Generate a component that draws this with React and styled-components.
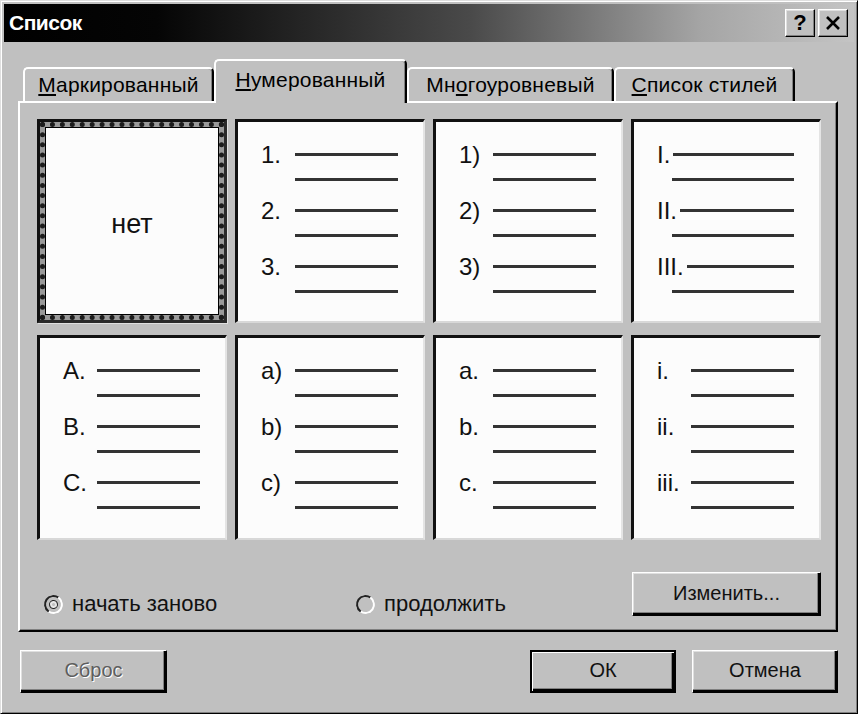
import React, { useState } from "react";
import styled, { createGlobalStyle } from "styled-components";

const GlobalStyle = createGlobalStyle`
  html, body {
    margin: 0;
    padding: 0;
    background: #c0c0c0;
  }
  body {
    font-family: "Liberation Sans", Arial, sans-serif;
  }
`;

const Window = styled.div`
  box-sizing: border-box;
  width: 858px;
  height: 714px;
  display: flex;
  flex-direction: column;
  background: #c0c0c0;
  border: 1px solid;
  border-color: #dfdfdf #000 #000 #dfdfdf;
  box-shadow: inset 1px 1px #fff, inset -1px -1px #808080;
  padding: 3px;
`;

const TitleBar = styled.div`
  height: 38px;
  flex: none;
  display: flex;
  align-items: center;
  justify-content: space-between;
  padding: 0 6px 0 5px;
  background: linear-gradient(90deg, #000 0%, #050505 18%, #4a4a4a 55%, #a5a5a5 82%, #c4c4c4 100%);
`;

const Title = styled.span`
  color: #fff;
  font-weight: bold;
  font-size: 21px;
  letter-spacing: -0.5px;
`;

const TitleButtons = styled.div`
  display: flex;
  gap: 3px;
`;

const TitleButton = styled.button`
  box-sizing: border-box;
  width: 30px;
  height: 28px;
  padding: 0;
  display: flex;
  align-items: center;
  justify-content: center;
  background: #c0c0c0;
  border: 1px solid;
  border-color: #fff #000 #000 #fff;
  box-shadow: inset -1px -1px #808080, inset 1px 1px #dfdfdf;
  font-family: "Liberation Sans", Arial, sans-serif;
  font-weight: bold;
  font-size: 22px;
  color: #000;
`;

const Body = styled.div`
  flex: 1;
  display: flex;
  flex-direction: column;
  padding: 17px 16px 17px 14px;
`;

const TabStrip = styled.div`
  display: flex;
  align-items: flex-end;
  height: 42px;
  padding-left: 5px;
`;

const Tab = styled.div`
  box-sizing: border-box;
  position: relative;
  z-index: ${(p) => (p.$active ? 2 : 0)};
  width: ${(p) => p.$width}px;
  height: ${(p) => (p.$active ? 44 : 34)}px;
  margin-bottom: ${(p) => (p.$active ? -2 : 0)}px;
  padding-bottom: ${(p) => (p.$active ? 4 : 0)}px;
  display: flex;
  align-items: center;
  justify-content: center;
  background: #c0c0c0;
  border-top: 2px solid #fff;
  border-left: 2px solid #fff;
  border-right: 2px solid #000;
  border-radius: 5px 5px 0 0;
  box-shadow: inset -1px 0 #808080;
  font-size: 21px;
  letter-spacing: 0.2px;
  color: #000;
  white-space: nowrap;
`;

const Panel = styled.div`
  position: relative;
  z-index: 1;
  box-sizing: border-box;
  height: 531px;
  flex: none;
  display: flex;
  flex-direction: column;
  padding: 16px 15px 14px 17px;
  border: 2px solid;
  border-color: #fff #000 #000 #fff;
  box-shadow: inset -1px -1px #808080;
`;

const Grid = styled.div`
  display: grid;
  grid-template-columns: repeat(4, 190px);
  grid-template-rows: 204px 205px;
  column-gap: 8px;
  row-gap: 12px;
`;

const Cell = styled.div`
  box-sizing: border-box;
  background: #fcfcfc;
  border-style: solid;
  border-width: 3px 2px 2px 3px;
  border-color: #111 #e4e4e4 #d8d8d8 #111;
  padding: 20px 25px 0 23px;
`;

const SelectedCell = styled.div`
  box-sizing: border-box;
  display: flex;
  border: 3px solid #111;
  border-right-color: #2a2a2a;
  border-bottom-color: #2a2a2a;
  box-shadow: 1px 1px 0 #e0e0e0;
`;

const DottedFrame = styled.div`
  flex: 1;
  display: flex;
  border: 5px dotted #1c1c1c;
  background: #9a9a9a;
`;

const NoneBox = styled.div`
  flex: 1;
  display: flex;
  align-items: center;
  justify-content: center;
  padding-top: 6px;
  background: #fcfcfc;
  border: 1px solid #000;
  font-size: 27px;
  color: #111;
`;

const Entry = styled.div`
  margin-bottom: 6px;
`;

const Row = styled.div`
  display: flex;
  align-items: center;
  height: 25px;
  padding-left: ${(p) => p.$indent || 0}px;
`;

const Label = styled.span`
  flex: none;
  width: ${(p) => (p.$hang ? "auto" : "34px")};
  margin-right: ${(p) => (p.$hang ? 3 : 0)}px;
  font-size: 24px;
  line-height: 25px;
  color: #111;
`;

const Rule = styled.div`
  flex: 1;
  height: 3px;
  background: #333;
`;

const Controls = styled.div`
  display: flex;
  align-items: flex-end;
  margin-top: 32px;
  height: 44px;
`;

const RadioLabel = styled.label`
  display: flex;
  align-items: center;
  gap: 9px;
  height: 24px;
  width: ${(p) => (p.$width ? `${p.$width}px` : "auto")};
  padding-left: ${(p) => p.$pad || 0}px;
  box-sizing: border-box;
  font-size: 22px;
  color: #111;
`;

const RadioCircle = styled.span`
  box-sizing: border-box;
  flex: none;
  width: 19px;
  height: 19px;
  border-radius: 50%;
  border: 2px solid;
  border-color: #222 #fff #fff #222;
  background: #c0c0c0;
  display: flex;
  align-items: center;
  justify-content: center;
  transform: rotate(-10deg);

  &::after {
    content: "";
    width: 7px;
    height: 7px;
    border-radius: 50%;
    border: 1px solid #222;
    background: #c0c0c0;
    box-shadow: inset 0 0 0 2px #e6e6e6;
    display: ${(p) => (p.$checked ? "block" : "none")};
  }
`;

const Button = styled.button`
  box-sizing: border-box;
  width: ${(p) => p.$width}px;
  height: ${(p) => p.$height || 43}px;
  background: #c0c0c0;
  border: ${(p) => (p.$default ? 2 : 1)}px solid;
  border-color: ${(p) => (p.$default ? "#000" : "#fff #000 #000 #fff")};
  box-shadow: ${(p) =>
    p.$default
      ? "inset 1px 1px #fff, inset -2px -2px #000, inset -3px -3px #808080"
      : "inset -2px -2px #000, inset -3px -3px #808080, inset 1px 1px #dfdfdf"};
  font-family: "Liberation Sans", Arial, sans-serif;
  font-size: 20px;
  color: ${(p) => (p.disabled ? "#5e5e5e" : "#111")};
  text-shadow: ${(p) => (p.disabled ? "1px 1px 0 #fff" : "none")};
  padding: 0 0 2px;
`;

const Footer = styled.div`
  display: flex;
  align-items: center;
  margin-top: 18px;
  padding-left: 2px;
  gap: 16px;
`;

const Spacer = styled.div`
  flex: 1;
`;

const RadioSlot = styled.div`
  flex: ${(p) => (p.$grow ? 1 : "none")};
`;

const formats = [
  { none: true },
  { labels: ["1.", "2.", "3."] },
  { labels: ["1)", "2)", "3)"] },
  { labels: ["I.", "II.", "III."], hang: true },
  { labels: ["A.", "B.", "C."] },
  { labels: ["a)", "b)", "c)"] },
  { labels: ["a.", "b.", "c."] },
  { labels: ["i.", "ii.", "iii."] },
];

const tabs = [
  { pre: "", key: "М", rest: "аркированный", width: 191 },
  { pre: "", key: "Н", rest: "умерованный", width: 193 },
  { pre: "Мн", key: "о", rest: "гоуровневый", width: 207 },
  { pre: "", key: "С", rest: "писок стилей", width: 181 },
];

const FormatCell = ({ format }) => {
  if (format.none) {
    return (
      <SelectedCell>
        <DottedFrame>
          <NoneBox>нет</NoneBox>
        </DottedFrame>
      </SelectedCell>
    );
  }
  return (
    <Cell>
      {format.labels.map((label) => (
        <Entry key={label}>
          <Row>
            <Label $hang={format.hang}>{label}</Label>
            <Rule />
          </Row>
          <Row $indent={format.hang ? 15 : 34}>
            <Rule />
          </Row>
        </Entry>
      ))}
    </Cell>
  );
};

const Radio = ({ checked, children, width, pad, onSelect }) => (
  <RadioLabel $width={width} $pad={pad} onClick={onSelect}>
    <RadioCircle $checked={checked} />
    {children}
  </RadioLabel>
);

const App = () => {
  const [restart, setRestart] = useState(true);

  return (
    <>
      <GlobalStyle />
      <Window>
        <TitleBar>
          <Title>Список</Title>
          <TitleButtons>
            <TitleButton>?</TitleButton>
            <TitleButton>
              <svg width="16" height="14" viewBox="0 0 16 14">
                <path d="M2 1 L14 13 M14 1 L2 13" stroke="#000" strokeWidth="2.6" />
              </svg>
            </TitleButton>
          </TitleButtons>
        </TitleBar>

        <Body>
          <TabStrip>
            {tabs.map((t, i) => (
              <Tab key={t.rest} $width={t.width} $active={i === 1}>
                {t.pre}
                <u>{t.key}</u>
                {t.rest}
              </Tab>
            ))}
          </TabStrip>

          <Panel>
            <Grid>
              {formats.map((f, i) => (
                <FormatCell key={i} format={f} />
              ))}
            </Grid>

            <Controls>
              <RadioSlot>
                <Radio checked={restart} width={319} pad={7} onSelect={() => setRestart(true)}>
                  начать заново
                </Radio>
              </RadioSlot>
              <RadioSlot $grow>
                <Radio checked={!restart} onSelect={() => setRestart(false)}>
                  продолжить
                </Radio>
              </RadioSlot>
              <Button $width={189} $height={44}>
                Изменить...
              </Button>
            </Controls>
          </Panel>

          <Footer>
            <Button $width={147} disabled>
              Сброс
            </Button>
            <Spacer />
            <Button $width={146} $default>
              ОК
            </Button>
            <Button $width={146}>Отмена</Button>
          </Footer>
        </Body>
      </Window>
    </>
  );
};

export default App;
